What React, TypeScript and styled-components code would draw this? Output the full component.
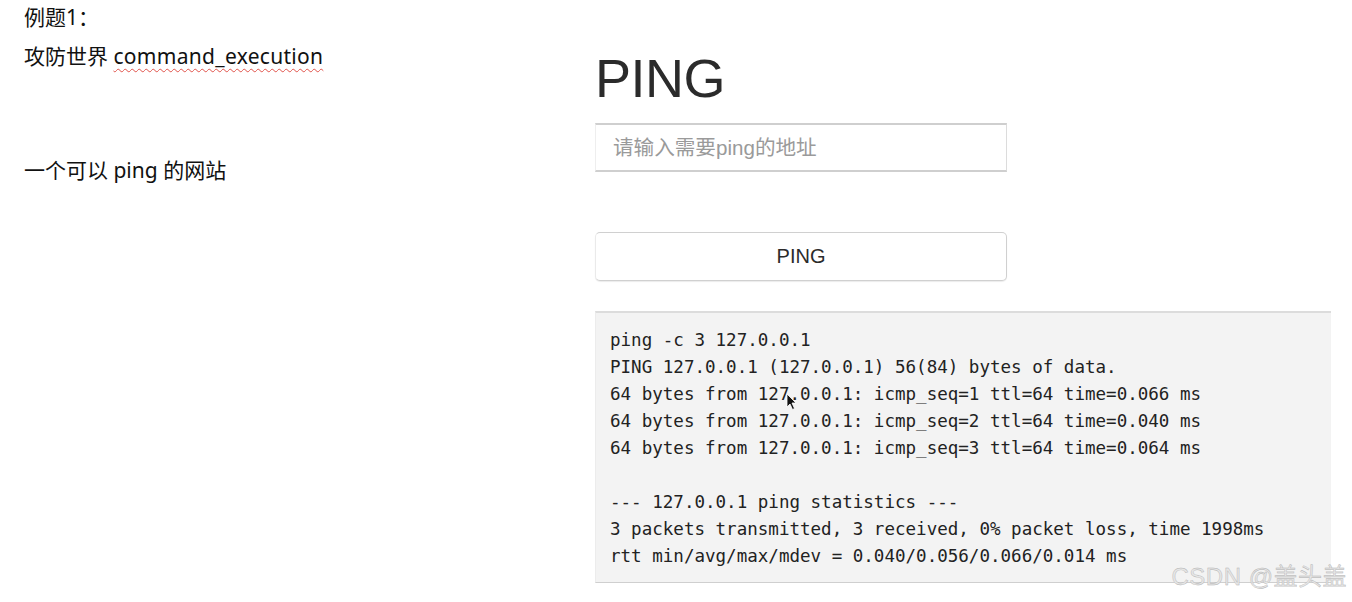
import React from "react";
import styled, { createGlobalStyle } from "styled-components";

const Global = createGlobalStyle`
  html, body { margin: 0; padding: 0; background: #ffffff; }
  body { width: 1352px; height: 602px; overflow: hidden; }
`;

const Page = styled.div`
  position: relative;
  display: flex;
  width: 1352px;
  height: 602px;
  background: #fff;
`;

const Doc = styled.div`
  width: 595px;
  flex: none;
  box-sizing: border-box;
  padding-left: 24px;
  margin-top: -2px;
  font-family: "Noto Sans", "Noto Sans CJK SC", sans-serif;
  font-size: 21px;
  color: #111;
`;

const DocLine = styled.div<{ $gapBefore?: number }>`
  line-height: 39px;
  height: 39px;
  margin-top: ${(p) => p.$gapBefore ?? 0}px;
  white-space: nowrap;
`;

const Spell = styled.span`
  letter-spacing: 0.3px;
  text-decoration: underline wavy #e0524a;
  text-decoration-thickness: 1px;
  text-underline-offset: 4px;
`;

const App2 = styled.div`
  display: flex;
  flex-direction: column;
  padding-top: 48px;
  font-family: "Liberation Sans", Arial, "Noto Sans CJK SC", sans-serif;
`;

const Title = styled.h1`
  margin: 0 0 15px;
  font-size: 54px;
  line-height: 60px;
  font-weight: 400;
  color: #2b2b2b;
  letter-spacing: -0.5px;
`;

const Field = styled.input`
  width: 412px;
  height: 49px;
  box-sizing: border-box;
  border: 1px solid #dcdcdc;
  border-top: 2px solid #cfcfcf;
  border-bottom: 2px solid #cfcfcf;
  border-left-color: #eeeeee;
  padding: 0 17px;
  font-family: "Liberation Sans", "Noto Sans CJK SC", sans-serif;
  font-size: 20.6px;
  color: #333;
  outline: none;
  background: #fff;
  &::placeholder { color: #9a9a9a; }
`;

const Button = styled.button`
  margin-top: 60px;
  width: 412px;
  height: 49px;
  box-sizing: border-box;
  border: 1px solid #d0d0d0;
  border-left-color: #eaeaea;
  border-radius: 5px;
  background: #fff;
  box-shadow: 0 1px 1px rgba(0, 0, 0, 0.08);
  font-family: "Liberation Sans", Arial, sans-serif;
  font-size: 20px;
  color: #2b2b2b;
  padding: 0;
`;

const Output = styled.pre`
  margin: 30px 0 0;
  width: 736px;
  height: 272px;
  box-sizing: border-box;
  padding: 14px 14px;
  background: #f3f3f3;
  border-top: 2px solid #dcdcdc;
  border-bottom: 1px solid #cfcfcf;
  border-left: 1px solid #ececec;
  font-family: "DejaVu Sans Mono", "Liberation Mono", monospace;
  font-size: 17.55px;
  line-height: 27px;
  color: #222;
`;

const Watermark = styled.div`
  position: absolute;
  right: 5px;
  bottom: 10px;
  font-family: "Liberation Sans", "Noto Sans CJK SC", sans-serif;
  font-size: 24px;
  color: #e6e6e6;
  -webkit-text-stroke: 0.4px #b0b0b0;
  letter-spacing: 0.5px;
`;

const Cursor = styled.svg`
  position: absolute;
  left: 786px;
  top: 393px;
`;

const text = `ping -c 3 127.0.0.1
PING 127.0.0.1 (127.0.0.1) 56(84) bytes of data.
64 bytes from 127.0.0.1: icmp_seq=1 ttl=64 time=0.066 ms
64 bytes from 127.0.0.1: icmp_seq=2 ttl=64 time=0.040 ms
64 bytes from 127.0.0.1: icmp_seq=3 ttl=64 time=0.064 ms

--- 127.0.0.1 ping statistics ---
3 packets transmitted, 3 received, 0% packet loss, time 1998ms
rtt min/avg/max/mdev = 0.040/0.056/0.066/0.014 ms`;

export default function App() {
  return (
    <Page>
      <Global />
      <Doc>
        <DocLine>例题1：</DocLine>
        <DocLine>
          攻防世界 <Spell>command_execution</Spell>
        </DocLine>
        <DocLine $gapBefore={36}>&nbsp;</DocLine>
        <DocLine>一个可以 ping 的网站</DocLine>
      </Doc>
      <App2>
        <Title>PING</Title>
        <Field placeholder="请输入需要ping的地址" />
        <Button>PING</Button>
        <Output>{text}</Output>
      </App2>
      <Cursor width="12" height="18" viewBox="0 0 12 18">
        <path d="M1 1 L1 14 L4 11 L6.5 16.5 L8.5 15.5 L6 10 L10 10 Z" fill="#111" stroke="#fff" strokeWidth="0.8" />
      </Cursor>
      <Watermark>CSDN @盖头盖</Watermark>
    </Page>
  );
}
